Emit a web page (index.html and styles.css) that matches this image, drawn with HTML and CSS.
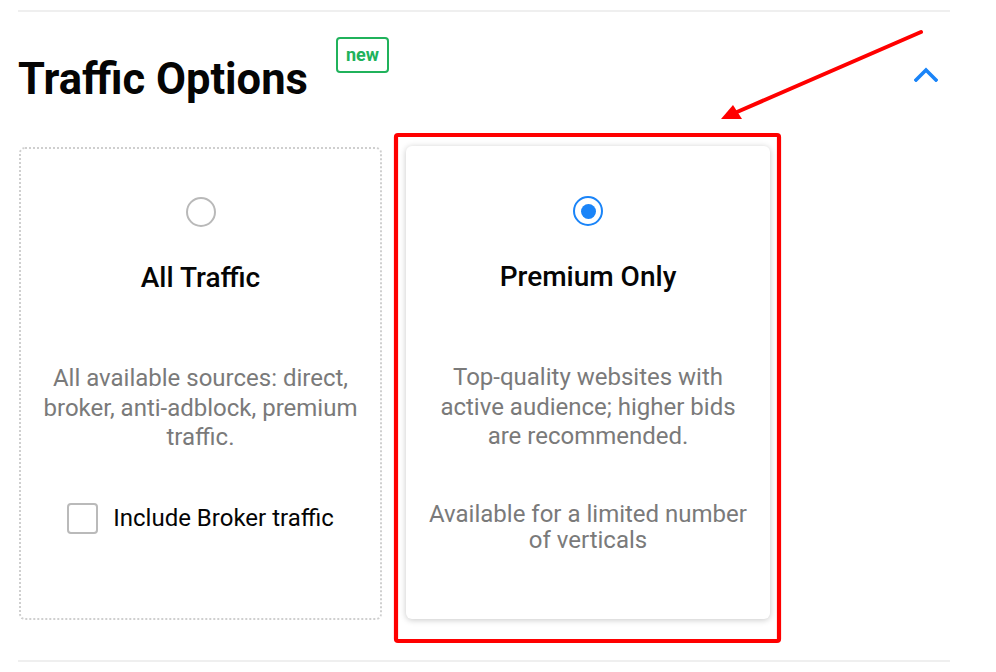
FILE: index.html
```html
<!DOCTYPE html>
<html lang="en">
<head>
<meta charset="utf-8">
<title>Traffic Options</title>
<link rel="stylesheet" href="styles.css">
</head>
<body>
<div class="page">
  <div class="rule"></div>
  <header class="header">
    <h1 class="title">Traffic Options</h1>
    <span class="badge">new</span>
    <button class="collapse" aria-label="Collapse">
      <svg width="24" height="15" viewBox="0 0 24 15"><path d="M2 13 L12 3 L22 13" fill="none" stroke="#1a84f8" stroke-width="3.6" stroke-linecap="square"/></svg>
    </button>
  </header>
  <div class="cards">
    <div class="card card-dotted">
      <span class="radio"></span>
      <h2 class="card-title">All Traffic</h2>
      <p class="desc">All available sources: direct, broker, anti-adblock, premium traffic.</p>
      <label class="check-row"><span class="checkbox"></span><span class="check-label">Include Broker traffic</span></label>
    </div>
    <div class="card card-selected">
      <span class="radio radio-on"><span class="dot"></span></span>
      <h2 class="card-title">Premium Only</h2>
      <p class="desc">Top-quality websites with active audience; higher bids are recommended.</p>
      <p class="desc desc-note">Available for a limited number of verticals</p>
    </div>
  </div>
  <div class="rule rule-bottom"></div>
</div>
<svg class="annotation" width="996" height="672" viewBox="0 0 996 672">
  <rect x="396" y="135" width="383" height="506" rx="2" fill="none" stroke="#ff0000" stroke-width="4.2"/>
  <line x1="921" y1="32" x2="737" y2="112" stroke="#ff0000" stroke-width="4" stroke-linecap="round"/>
  <polygon points="721,119 733,105 742,119" fill="#ff0000"/>
</svg>
</body>
</html>
```
FILE: styles.css
```css
* { box-sizing: border-box; }
html, body { margin: 0; padding: 0; background: #fff; }
body {
  font-family: Roboto, "Liberation Sans", Arial, sans-serif;
  color: #000;
  width: 996px;
  height: 672px;
  overflow: hidden;
  position: relative;
}
.page {
  padding: 10px 46px 0 18px;
}
.rule {
  height: 2px;
  background: #efefef;
}
.header {
  display: flex;
  align-items: flex-start;
  margin-top: 25px;
  height: 70px;
}
.title {
  margin: 17px 0 0 0;
  font-size: 43.5px;
  line-height: 52px;
  font-weight: 700;
  color: #050505;
}
.badge {
  margin-left: 28px;
  height: 36px;
  padding: 0 8px;
  border: 2px solid #20b25b;
  border-radius: 4px;
  color: #20b25b;
  font-weight: 700;
  font-size: 18px;
  line-height: 31px;
}
.collapse {
  margin: 30px 12px 0 auto;
  padding: 0;
  border: 0;
  background: none;
  width: 24px;
  height: 15px;
  display: block;
}
.collapse svg { display: block; }
.cards {
  display: flex;
  gap: 24px;
  margin: 40px 0 0 1px;
}
.card {
  width: 363px;
  height: 473px;
  border: 2px solid transparent;
  border-radius: 6px;
  padding: 48px 20px 0;
  display: flex;
  flex-direction: column;
  align-items: center;
  text-align: center;
  background: #fff;
}
.card-dotted {
  border: 2px dotted #cfcfcf;
}
.card-selected {
  width: 364px;
  margin-top: -1px;
  box-shadow: 0 1px 6px rgba(0, 0, 0, 0.22);
}
.radio {
  width: 30px;
  height: 30px;
  border: 2px solid #b9b9b9;
  border-radius: 50%;
  display: flex;
  align-items: center;
  justify-content: center;
  flex: none;
}
.radio-on {
  border-color: #1a84f8;
}
.dot {
  width: 15px;
  height: 15px;
  border-radius: 50%;
  background: #1a84f8;
}
.card-title {
  margin: 36px 0 0;
  font-size: 28px;
  line-height: 30px;
  font-weight: 500;
  color: #050505;
}
.desc {
  margin: 71px 0 0;
  font-size: 24px;
  line-height: 29.5px;
  color: #7a7a7a;
}
.desc-note {
  margin-top: 49px;
  line-height: 26px;
}
.check-row {
  margin-top: 50px;
  display: flex;
  align-items: center;
  gap: 15px;
}
.checkbox {
  width: 31px;
  height: 31px;
  border: 2px solid #bababa;
  border-radius: 4px;
  flex: none;
}
.check-label {
  font-size: 24px;
  line-height: 30px;
  color: #050505;
}
.rule-bottom {
  margin-top: 40px;
}
.annotation {
  position: absolute;
  left: 0;
  top: 0;
  pointer-events: none;
}
```
